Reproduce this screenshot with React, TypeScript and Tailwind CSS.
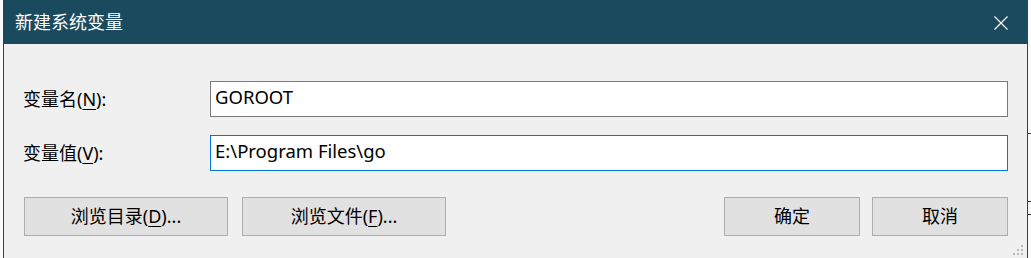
import React from 'react';

const cjk = "'Noto Sans', 'Noto Sans CJK SC', sans-serif";

const Key = ({ children }: { children: React.ReactNode }) => (
  <span className="underline decoration-1 underline-offset-[3px]">{children}</span>
);

const Field = ({
  label,
  hotkey,
  value,
  focused,
}: {
  label: string;
  hotkey: string;
  value: string;
  focused?: boolean;
}) => (
  <div className="flex items-center">
    <div className="w-[206px] shrink-0 pl-[19px] text-[18px] text-black">
      {label}(<Key>{hotkey}</Key>):
    </div>
    <div
      className={`flex h-[36px] w-[798px] shrink-0 items-center bg-white pl-[4px] pb-[4px] text-[18.5px] text-black ${
        focused ? 'border border-[#0078d7]' : 'border border-[#7a7a7a]'
      }`}
    >
      {value}
    </div>
  </div>
);

const Button = ({ width, children }: { width: string; children: React.ReactNode }) => (
  <button
    type="button"
    className={`flex h-[39px] items-center justify-center border border-[#adadad] bg-[#e1e1e1] text-[18px] text-black ${width}`}
  >
    {children}
  </button>
);

const App = (): JSX.Element => (
  <div className="flex h-[258px] w-[1031px] overflow-hidden bg-white" style={{ fontFamily: cjk }}>
    <div className="w-[3px] bg-[#fafafa]" />
    <div className="flex w-[1025px] flex-col border-x border-[#1e4b5e] bg-[#f0f0f0]">
      <div className="flex h-[44px] shrink-0 items-center justify-between bg-[#1a4a5e] pl-[11px] pr-[19px]">
        <span className="text-[18px] text-white">新建系统变量</span>
        <svg width="14" height="14" viewBox="0 0 14 14" className="mt-[1px]">
          <path d="M0.5 0.5 L13.5 13.5 M13.5 0.5 L0.5 13.5" stroke="#ffffff" strokeWidth="1.2" fill="none" />
        </svg>
      </div>
      <div className="relative flex flex-1 flex-col pt-[37px]">
        <Field label="变量名" hotkey="N" value="GOROOT" />
        <div className="mt-[18px]">
          <Field label="变量值" hotkey="V" value="E:\Program Files\go" focused />
        </div>
        <div className="mt-[26px] flex items-center pl-[20px] pr-[19px]">
          <Button width="w-[204px]">
            浏览目录(<Key>D</Key>)...
          </Button>
          <div className="ml-[14px]">
            <Button width="w-[204px]">
              浏览文件(<Key>F</Key>)...
            </Button>
          </div>
          <div className="ml-auto flex gap-[12px]">
            <Button width="w-[136px]">确定</Button>
            <Button width="w-[136px]">取消</Button>
          </div>
        </div>
        <svg width="14" height="14" viewBox="0 0 14 14" className="absolute bottom-[1px] right-[2px]">
          <g fill="#b8b8b8">
            <rect x="10" y="2" width="2" height="2" />
            <rect x="6" y="6" width="2" height="2" />
            <rect x="10" y="6" width="2" height="2" />
            <rect x="2" y="10" width="2" height="2" />
            <rect x="6" y="10" width="2" height="2" />
            <rect x="10" y="10" width="2" height="2" />
          </g>
        </svg>
      </div>
    </div>
    <div className="flex flex-1 flex-col bg-[#fafafa]">
      <div className="mt-[133px] h-px bg-[#1e4b5e]" />
      <div className="mt-[67px] h-px bg-[#222]" />
      <div className="mt-[12px] h-px bg-[#222]" />
    </div>
  </div>
);

export default App;
